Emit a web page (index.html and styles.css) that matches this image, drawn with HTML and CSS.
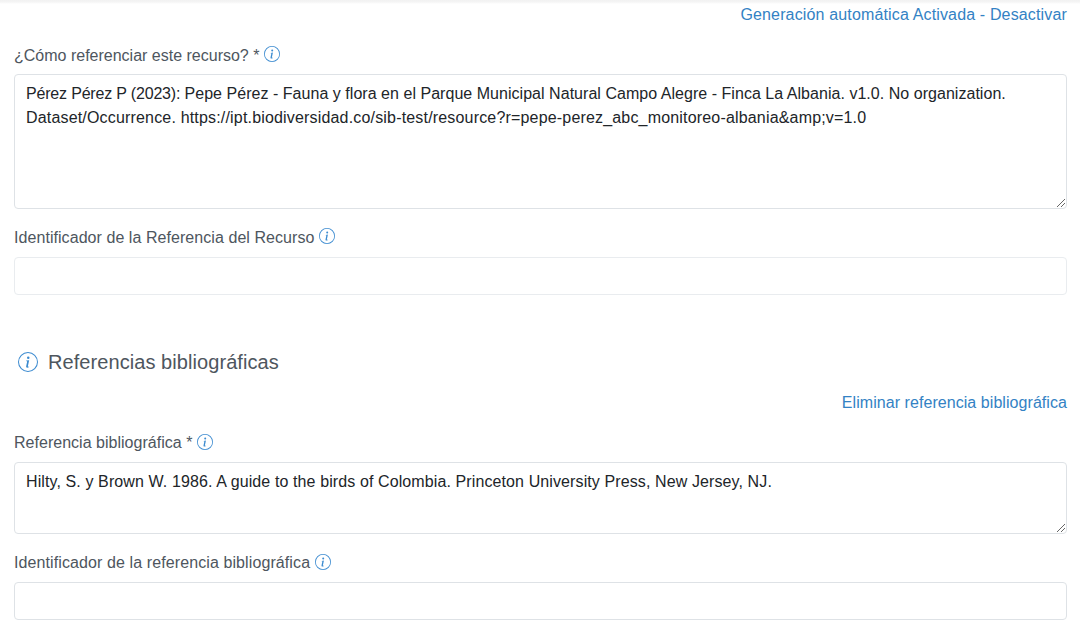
FILE: index.html
```html
<!DOCTYPE html>
<html lang="es">
<head>
<meta charset="utf-8">
<title>Referencias</title>
<link rel="stylesheet" href="styles.css">
</head>
<body>
<svg class="defs" width="0" height="0">
  <symbol id="info" viewBox="0 0 16 16">
    <path d="M8 15.200A7.200 7.200 0 1 1 8 .8a7.200 7.200 0 0 1 0 14.400zM8 16A8 8 0 1 0 8 0a8 8 0 0 0 0 16z"/>
    <path d="m8.930 6.588-2.290.287-.082.380.450.083c.294.070.352.176.288.469l-.738 3.468c-.194.897.105 1.319.808 1.319.545 0 1.178-.252 1.465-.598l.088-.416c-.200.176-.492.246-.686.246-.275 0-.375-.193-.304-.533L8.930 6.588zM9.200 4.500a1 1 0 1 1-2 0 1 1 0 0 1 2 0z"/>
  </symbol>
</svg>
<main class="form">
  <div class="actions"><a class="t-auto">Generación automática Activada - Desactivar</a></div>
  <div class="label label-cite"><span class="t-cite">¿Cómo referenciar este recurso? *</span><svg class="icon"><use href="#info"/></svg></div>
  <div class="box area-cite"><p class="t-line1"><span class="t-author">Pérez Pérez P (2023): </span>Pepe Pérez - Fauna y flora en el Parque Municipal Natural Campo Alegre - Finca La Albania. v1.0. No organization.</p><p class="t-line2">Dataset/Occurrence. https://ipt.biodiversidad.co/sib-test/resource?r=pepe-perez_abc_monitoreo-albania&amp;amp;v=1.0</p><svg class="grip" viewBox="0 0 10 10"><path d="M1 9 9 1M5 9 9 5"/></svg></div>
  <div class="label label-id"><span class="t-id">Identificador de la Referencia del Recurso</span><svg class="icon"><use href="#info"/></svg></div>
  <div class="box input pale"></div>
  <h2 class="heading"><svg class="icon-large"><use href="#info"/></svg><span class="t-head">Referencias bibliográficas</span></h2>
  <div class="actions actions-remove"><a class="t-remove">Eliminar referencia bibliográfica</a></div>
  <div class="label label-ref"><span class="t-ref">Referencia bibliográfica *</span><svg class="icon"><use href="#info"/></svg></div>
  <div class="box area-ref"><p class="t-hilty">Hilty, S. y Brown W. 1986. A guide to the birds of Colombia. Princeton University Press, New Jersey, NJ.</p><svg class="grip" viewBox="0 0 10 10"><path d="M1 9 9 1M5 9 9 5"/></svg></div>
  <div class="label label-refid"><span class="t-refid">Identificador de la referencia bibliográfica</span><svg class="icon"><use href="#info"/></svg></div>
  <div class="box input"></div>
</main>
</body>
</html>
```
FILE: styles.css
```css
* { box-sizing: border-box; }
body { margin: 0; background: #fff; color: #4e565e; font: 16px/24px "Liberation Sans", Arial, sans-serif; overflow: hidden; }
.defs { display: block; height: 0; }
.form { height: 629px; padding: 3px 13px 0 14px; background: linear-gradient(#f2f2f2, #f5f5f5 2px, #fff 4px); }
.actions { display: flex; justify-content: flex-end; height: 24px; color: #3382c4; white-space: nowrap; }
.label { display: flex; align-items: flex-start; gap: 5px; height: 24px; white-space: nowrap; }
.icon { width: 16px; height: 16px; margin-top: 3px; fill: #3c8bd0; }
.label-cite { margin-top: 16px; }
.box { position: relative; border: 1px solid #dee2e6; border-radius: 4px; color: #212529; padding: 7px 11px; }
.box p { margin: 0; white-space: nowrap; }
.area-cite { height: 135px; margin-top: 7px; }
.label-id { margin-top: 16px; }
.t-cite, .t-id { padding-top: 1px; }
.input { height: 38px; margin-top: 8px; }
.pale { border-color: #e9ecef; }
.heading { display: flex; align-items: center; gap: 10px; height: 30px; margin: 52px 0 0 4px; font-size: 20px; font-weight: 400; line-height: 30px; }
.icon-large { width: 20px; height: 20px; fill: #3c8bd0; }
.actions-remove { margin-top: 14px; }
.label-ref { margin-top: 16px; }
.area-ref { height: 72px; margin-top: 7px; }
.label-refid { margin-top: 17px; }
.label-refid + .input { margin-top: 7px; }
.grip { position: absolute; right: 0; bottom: 0; width: 10px; height: 10px; fill: none; stroke: #666; }
.t-auto { letter-spacing: 0.15px; }
.t-author { letter-spacing: -0.18px; }
.t-line1 { letter-spacing: 0.035px; }
.t-line2 { letter-spacing: 0.175px; }
.t-id { letter-spacing: 0.06px; }
.t-head { letter-spacing: 0.07px; }
.t-remove { letter-spacing: 0.06px; }
.t-ref { letter-spacing: 0.02px; }
.t-hilty { letter-spacing: 0.107px; }
.t-refid { letter-spacing: 0.1px; }
```
